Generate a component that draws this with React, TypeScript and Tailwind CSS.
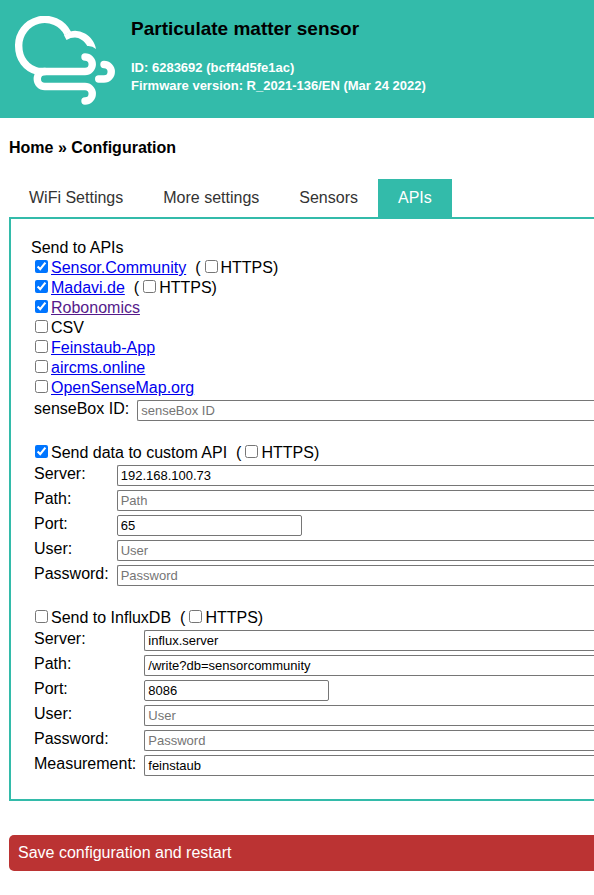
import { useId } from "react";

type FieldProps = {
  label: string;
  value?: string;
  placeholder?: string;
  type?: string;
  short?: boolean;
};

function Field({ label, value, placeholder, type = "text", short }: FieldProps) {
  const id = useId();
  return (
    <>
      <label htmlFor={id} className="leading-[18px]">
        {label}:
      </label>
      <input
        id={id}
        type={type}
        defaultValue={value}
        placeholder={placeholder}
        className={
          short
            ? "h-[21px] w-[185px] rounded-xs border border-[#767676] bg-white px-[3px] text-[13px] placeholder:text-[#757575]"
            : "h-[21px] w-full min-w-0 rounded-l-xs border border-r-0 border-[#767676] bg-white px-[3px] text-[13px] placeholder:text-[#757575]"
        }
      />
    </>
  );
}

function Fields({ children }: { children: React.ReactNode }) {
  return (
    <div className="grid grid-cols-[auto_1fr] gap-x-2 gap-y-1 py-0.5 pl-[3px]">{children}</div>
  );
}

type OptionProps = {
  label: string;
  href?: string;
  visited?: boolean;
  checked?: boolean;
  https?: boolean;
};

function Option({ label, href, visited, checked, https }: OptionProps) {
  const id = useId();
  const httpsId = useId();
  return (
    <div className="flex items-start leading-5">
      <input
        id={id}
        type="checkbox"
        defaultChecked={checked}
        aria-label={label}
        className="mt-0.5 mr-[3px] ml-1 size-[13px]"
      />
      {href ? (
        <a href={href} className={visited ? "text-[#551a8b] underline" : "text-[#0000ee] underline"}>
          {label}
        </a>
      ) : (
        <label htmlFor={id}>{label}</label>
      )}
      {https && (
        <span className="ml-[9px] flex items-start">
          (
          <input id={httpsId} type="checkbox" className="mt-0.5 mr-[3px] ml-1 size-[13px]" />
          <label htmlFor={httpsId}>HTTPS</label>)
        </span>
      )}
    </div>
  );
}

function Logo() {
  return (
    <svg
      width="100"
      height="90"
      viewBox="15 16 100 90"
      fill="none"
      stroke="white"
      strokeWidth="7.4"
      strokeLinecap="round"
      aria-hidden="true"
    >
      <path
        strokeLinecap="butt"
        d="M38 71.5C26 68.5 18.7 58.5 18.7 46A26 26 0 0 1 67.8 33.5"
      />
      <path
        stroke="none"
        fill="white"
        d="M64 35.3L70.5 31.4Q78 29.6 85 33.6C90.500 36.800 95 42.500 96 49Q92 45.500 87.300 46C84 40.500 79 37.600 75 37.600Q70.500 37.600 66.500 40Z"
      />
      <path d="M38 71.5H85a7.25 7.25 0 0 0 0-14.5" />
      <path d="M44.8 71.5a7.5 7.5 0 0 0 0 15H85a7.25 7.25 0 0 1 0 14.5" />
      <path d="M104 64.5a7.25 7.25 0 0 1 0 14.5H98.7" />
    </svg>
  );
}

const tabs = ["WiFi Settings", "More settings", "Sensors", "APIs"];

export default function App() {
  return (
    <div className="min-h-screen overflow-hidden bg-white font-['Liberation_Sans',Arial,sans-serif] text-base text-black">
      <header className="flex h-[118px] items-start bg-[#33bbaa] pt-4 pl-[15px] font-bold">
        <Logo />
        <div className="ml-4">
          <h1 className="text-[19px] leading-[26px]">Particulate matter sensor</h1>
          <p className="mt-[17px] text-[13px] leading-[18px] text-white">
            ID: 6283692 (bcff4d5fe1ac)
            <br />
            Firmware version: R_2021-136/EN (Mar 24 2022)
          </p>
        </div>
      </header>

      <main className="pl-[9px]">
        <nav className="pt-5 leading-5 font-bold">
          <a href="#home">Home</a> » Configuration
        </nav>

        <div role="tablist" className="mt-[21px] flex">
          {tabs.map((tab) => (
            <button
              key={tab}
              type="button"
              role="tab"
              aria-selected={tab === "APIs"}
              className="h-[38px] px-5 leading-[18px] text-[#333333] aria-selected:bg-[#33bbaa] aria-selected:text-white"
            >
              {tab}
            </button>
          ))}
        </div>

        <form>
          <div className="border-2 border-r-0 border-[#33bbaa] pt-[19px] pb-[21px] pl-5">
            <p className="leading-5">Send to APIs</p>
            <Option label="Sensor.Community" href="#sensor-community" checked https />
            <Option label="Madavi.de" href="#madavi" checked https />
            <Option label="Robonomics" href="#robonomics" visited checked />
            <Option label="CSV" />
            <Option label="Feinstaub-App" href="#feinstaub-app" />
            <Option label="aircms.online" href="#aircms" />
            <Option label="OpenSenseMap.org" href="#opensensemap" />
            <Fields>
              <Field label="senseBox ID" placeholder="senseBox ID" />
            </Fields>

            <div className="mt-5">
              <Option label="Send data to custom API" checked https />
              <Fields>
                <Field label="Server" value="192.168.100.73" />
                <Field label="Path" placeholder="Path" />
                <Field label="Port" value="65" short />
                <Field label="User" placeholder="User" />
                <Field label="Password" placeholder="Password" type="password" />
              </Fields>
            </div>

            <div className="mt-5">
              <Option label="Send to InfluxDB" https />
              <Fields>
                <Field label="Server" value="influx.server" />
                <Field label="Path" value="/write?db=sensorcommunity" />
                <Field label="Port" value="8086" short />
                <Field label="User" placeholder="User" />
                <Field label="Password" placeholder="Password" type="password" />
                <Field label="Measurement" value="feinstaub" />
              </Fields>
            </div>
          </div>

          <button
            type="submit"
            className="mt-[34px] block h-9 w-full rounded-l-[5px] bg-[#bb3333] px-[9px] text-left text-white"
          >
            Save configuration and restart
          </button>
        </form>
      </main>
    </div>
  );
}
